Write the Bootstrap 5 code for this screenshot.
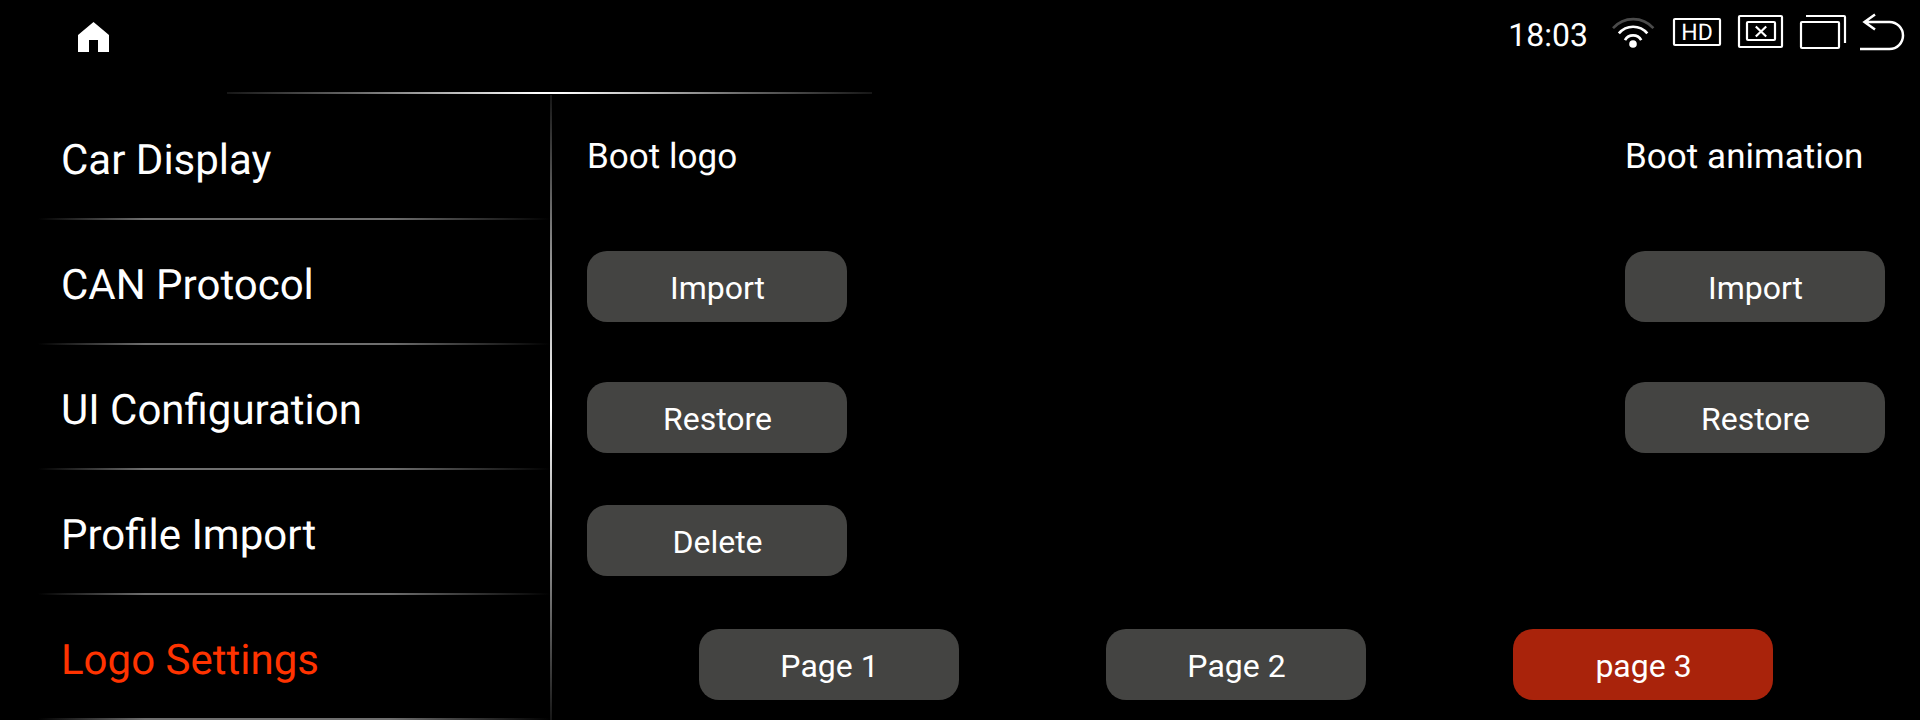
<!DOCTYPE html>
<html lang="en" data-bs-theme="dark">
<head>
<meta charset="utf-8">
<meta name="viewport" content="width=device-width, initial-scale=1">
<title>Logo Settings</title>
<link href="https://cdn.jsdelivr.net/npm/bootstrap@5.3.0/dist/css/bootstrap.min.css" rel="stylesheet">
<style>
  body { background: #000; color: #fff; font-family: Roboto, "Liberation Sans", sans-serif; text-rendering: geometricPrecision; }
  .screen { height: 720px; }
  .topbar { height: 92px; padding: 0 15px 0 78px; }
  .home-icon { margin-top: 22px; }
  .clock { font-size: 32px; line-height: 36px; margin: 17px 23px 0 0; }
  .top-rule { width: 645px; height: 2px; margin: 0 0 1px 227px;
    background: linear-gradient(90deg, #161616, #6a6a6a 20%, #fff 48%, #fff 52%, #6a6a6a 80%, #161616); }
  .sidebar { width: 550px; }
  .menu-entry { height: 125px; padding: 41px 0 0 61px; font-size: 42px; line-height: 50px; color: #fff;
    background: linear-gradient(90deg, transparent 38px, #6f6f6f 145px, #6f6f6f 390px, transparent 550px) bottom / 100% 2px no-repeat; }
  .menu-entry.active { color: #ff3300; }
  .side-rule { width: 2px; background: linear-gradient(#161616, #fff 312px, #161616); }
  .panel-body { padding: 42px 35px 0; }
  .group { width: 260px; }
  .group-title { font-size: 35px; line-height: 40px; font-weight: 400; letter-spacing: .04px; margin: 0 0 74px; }
  .pill { width: 260px; height: 71px; padding: 3px 0 0 1px; border: 0; border-radius: 20px;
    background: #444442; color: #fff; font-size: 32px; line-height: 38px; }
  .pill:hover { background: #555553; color: #fff; }
  .pill.current { background: #a9230b; }
  .pill-restore { margin-top: 60px; }
  .pill-delete { margin-top: 52px; }
  .pages { padding-bottom: 20px; }
</style>
</head>
<body>
<div class="screen d-flex flex-column overflow-hidden">
  <header class="topbar d-flex justify-content-between align-items-start">
    <a href="#" class="home-icon d-block lh-1" aria-label="Home">
      <svg class="d-block" width="31" height="30" viewBox="0 0 31 30"><path fill="#fff" d="M15.5 0 31 13v17H20V18h-9v12H0V13z"/></svg>
    </a>
    <div class="d-flex align-items-start">
      <div class="clock">18:03</div>
      <svg class="d-block" width="294" height="60" viewBox="1611 0 294 60" fill="none" stroke="#fff" stroke-width="2.2">
        <!-- wifi -->
        <path d="M1613 28.2a27 27 0 0 1 40.4 0" stroke="#4b4b4b" stroke-width="2.6"/>
        <path d="M1618.9 33.4a18.5 18.5 0 0 1 28.4 0" stroke-width="2.7"/>
        <path d="M1625 40.2a9.3 9.3 0 0 1 16.2 0" stroke-width="2.7"/>
        <circle cx="1633" cy="44" r="3.8" fill="#fff" stroke="none"/>
        <!-- HD -->
        <rect x="1674" y="19" width="46" height="26" rx="1"/>
        <text x="1697" y="40" text-anchor="middle" font-size="23" font-weight="400" fill="#fff" stroke="none">HD</text>
        <!-- screen off -->
        <rect x="1739" y="16" width="43" height="31" rx="1"/>
        <rect x="1747" y="22" width="28" height="18" rx="1"/>
        <path d="M1755.8 26.5l10.4 10M1766.2 26.5l-10.4 10"/>
        <!-- recent apps -->
        <rect x="1801" y="22" width="38" height="26" rx="1"/>
        <path d="M1806 16h38a1 1 0 0 1 1 1v26"/>
        <!-- back -->
        <path d="M1864 22h25.5a13.4 13.4 0 0 1 0 27H1860M1875 14.5 1864.5 22l10.5 7.5" stroke-width="2.5"/>
      </svg>
    </div>
  </header>
  <div class="top-rule flex-shrink-0"></div>

  <div class="d-flex flex-grow-1">
    <nav class="sidebar flex-shrink-0">
      <a href="#" class="menu-entry d-block text-decoration-none">Car Display</a>
      <a href="#" class="menu-entry d-block text-decoration-none">CAN Protocol</a>
      <a href="#" class="menu-entry d-block text-decoration-none">UI Configuration</a>
      <a href="#" class="menu-entry d-block text-decoration-none">Profile Import</a>
      <a href="#" class="menu-entry d-block text-decoration-none active">Logo Settings</a>
    </nav>
    <div class="side-rule flex-shrink-0"></div>

    <main class="d-flex flex-column justify-content-between flex-grow-1">
      <div class="panel-body d-flex justify-content-between">
        <section class="group d-flex flex-column">
          <h2 class="group-title">Boot logo</h2>
          <button type="button" class="btn pill">Import</button>
          <button type="button" class="btn pill pill-restore">Restore</button>
          <button type="button" class="btn pill pill-delete">Delete</button>
        </section>
        <section class="group d-flex flex-column">
          <h2 class="group-title">Boot animation</h2>
          <button type="button" class="btn pill">Import</button>
          <button type="button" class="btn pill pill-restore">Restore</button>
        </section>
      </div>
      <div class="pages d-flex justify-content-evenly">
        <button type="button" class="btn pill">Page 1</button>
        <button type="button" class="btn pill">Page 2</button>
        <button type="button" class="btn pill current">page 3</button>
      </div>
    </main>
  </div>
</div>
<script src="https://cdn.jsdelivr.net/npm/bootstrap@5.3.0/dist/js/bootstrap.bundle.min.js"></script>
</body>
</html>
